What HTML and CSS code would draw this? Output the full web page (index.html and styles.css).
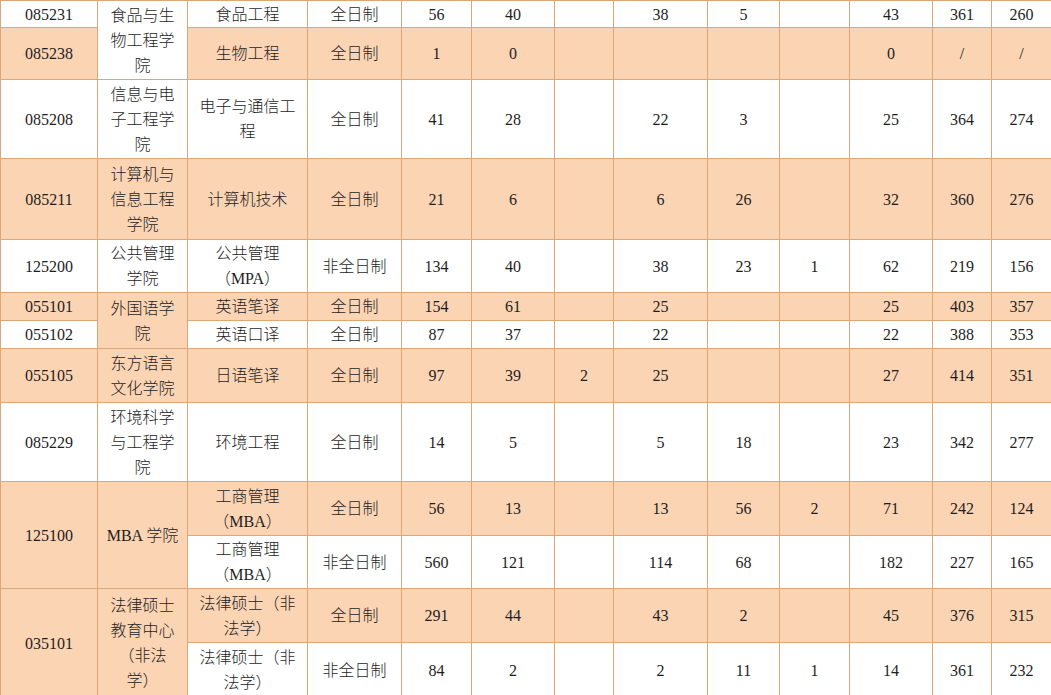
FILE: index.html
```html
<!DOCTYPE html>
<html lang="zh">
<head>
<meta charset="utf-8">
<link rel="stylesheet" href="styles.css">
</head>
<body>
<table class="grid">
<colgroup>
<col class="c1"><col class="c2"><col class="c3"><col class="c4"><col class="c5"><col class="c6"><col class="c7"><col class="c8"><col class="c9"><col class="c10"><col class="c11"><col class="c12"><col class="c13">
</colgroup>
<tbody>
<tr class="h27">
<td>085231</td><td rowspan="2" class="wrap">食品与生<br>物工程学<br>院</td><td>食品工程</td><td>全日制</td><td>56</td><td>40</td><td></td><td>38</td><td>5</td><td></td><td>43</td><td>361</td><td>260</td>
</tr>
<tr class="h52 o">
<td>085238</td><td>生物工程</td><td>全日制</td><td>1</td><td>0</td><td></td><td></td><td></td><td></td><td>0</td><td>/</td><td>/</td>
</tr>
<tr class="h79">
<td>085208</td><td>信息与电<br>子工程学<br>院</td><td>电子与通信工<br>程</td><td>全日制</td><td>41</td><td>28</td><td></td><td>22</td><td>3</td><td></td><td>25</td><td>364</td><td>274</td>
</tr>
<tr class="h81 o">
<td>085211</td><td>计算机与<br>信息工程<br>学院</td><td>计算机技术</td><td>全日制</td><td>21</td><td>6</td><td></td><td>6</td><td>26</td><td></td><td>32</td><td>360</td><td>276</td>
</tr>
<tr class="h53">
<td>125200</td><td>公共管理<br>学院</td><td>公共管理<br>（MPA）</td><td>非全日制</td><td>134</td><td>40</td><td></td><td>38</td><td>23</td><td>1</td><td>62</td><td>219</td><td>156</td>
</tr>
<tr class="h28 o">
<td>055101</td><td rowspan="2">外国语学<br>院</td><td>英语笔译</td><td>全日制</td><td>154</td><td>61</td><td></td><td>25</td><td></td><td></td><td>25</td><td>403</td><td>357</td>
</tr>
<tr class="h28">
<td>055102</td><td>英语口译</td><td>全日制</td><td>87</td><td>37</td><td></td><td>22</td><td></td><td></td><td>22</td><td>388</td><td>353</td>
</tr>
<tr class="h54 o">
<td>055105</td><td>东方语言<br>文化学院</td><td>日语笔译</td><td>全日制</td><td>97</td><td>39</td><td>2</td><td>25</td><td></td><td></td><td>27</td><td>414</td><td>351</td>
</tr>
<tr class="h79">
<td>085229</td><td>环境科学<br>与工程学<br>院</td><td>环境工程</td><td>全日制</td><td>14</td><td>5</td><td></td><td>5</td><td>18</td><td></td><td>23</td><td>342</td><td>277</td>
</tr>
<tr class="h54 o">
<td rowspan="2">125100</td><td rowspan="2">MBA 学院</td><td>工商管理<br>（MBA）</td><td>全日制</td><td>56</td><td>13</td><td></td><td>13</td><td>56</td><td>2</td><td>71</td><td>242</td><td>124</td>
</tr>
<tr class="h53">
<td class="w">工商管理<br>（MBA）</td><td>非全日制</td><td>560</td><td>121</td><td></td><td>114</td><td>68</td><td></td><td>182</td><td>227</td><td>165</td>
</tr>
<tr class="h54 o">
<td rowspan="2">035101</td><td rowspan="2">法律硕士<br>教育中心<br>（非法<br>学）</td><td>法律硕士（非<br>法学）</td><td>全日制</td><td>291</td><td>44</td><td></td><td>43</td><td>2</td><td></td><td>45</td><td>376</td><td>315</td>
</tr>
<tr class="h55">
<td>法律硕士（非<br>法学）</td><td>非全日制</td><td>84</td><td>2</td><td></td><td>2</td><td>11</td><td>1</td><td>14</td><td>361</td><td>232</td>
</tr>
</tbody>
</table>
</body>
</html>
```

FILE: styles.css
```css
html, body {
  margin: 0;
  padding: 0;
  background: #ffffff;
  overflow: hidden;
}

.grid {
  border-collapse: collapse;
  table-layout: fixed;
  width: 1051px;
  font-family: "Liberation Serif", "Noto Sans CJK SC", serif;
  font-size: 16px;
  font-weight: 300;
  line-height: 25px;
  color: #1e1e1e;
}

.grid td {
  border: 1px solid #dca676;
  padding: 0;
  text-align: center;
  vertical-align: middle;
  overflow: hidden;
  white-space: nowrap;
}

.o td {
  background: #fbd4b4;
}

.grid .o td.w,
.grid tr:not(.o) td {
  background: #ffffff;
}

.c1 { width: 97px; }
.c2 { width: 90px; }
.c3 { width: 120px; }
.c4 { width: 94px; }
.c5 { width: 70px; }
.c6 { width: 83px; }
.c7 { width: 59px; }
.c8 { width: 94px; }
.c9 { width: 72px; }
.c10 { width: 70px; }
.c11 { width: 83px; }
.c12 { width: 59px; }
.c13 { width: 60px; }

.h27 { height: 27px; }
.h28 { height: 28px; }
.h52 { height: 52px; }
.h53 { height: 53px; }
.h54 { height: 54px; }
.h55 { height: 55px; }
.h79 { height: 79px; }
.h81 { height: 81px; }
```
